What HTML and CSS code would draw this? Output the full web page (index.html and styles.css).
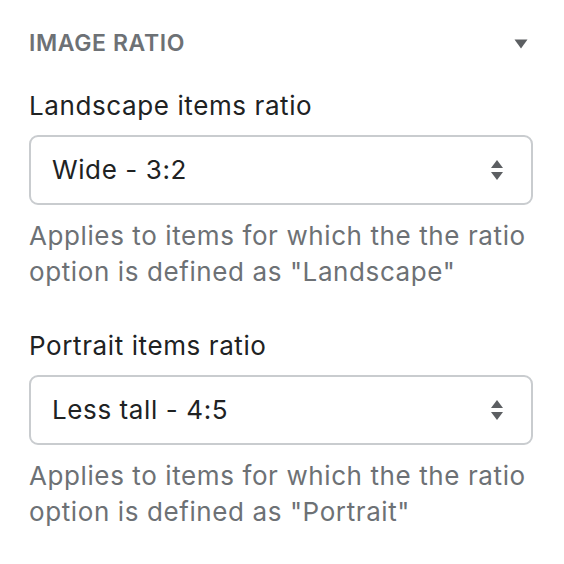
FILE: index.html
```html
<!DOCTYPE html>
<html lang="en">
<head>
<meta charset="utf-8">
<title>Image ratio</title>
<link rel="stylesheet" href="styles.css">
</head>
<body>
<div class="panel">
  <div class="section-head">
    <span class="section-title">IMAGE RATIO</span>
    <svg class="caret" width="14" height="10" viewBox="0 0 14 10"><path d="M0.5 0.5 H13.5 L7 9.5 Z" fill="#5c5f62"/></svg>
  </div>

  <div class="field">
    <div class="label">Landscape items ratio</div>
    <div class="select">
      <span class="value">Wide - 3:2</span>
      <svg class="arrows" width="14" height="22" viewBox="0 0 14 22"><path d="M7 1 L13 9 H1 Z M1 13 H13 L7 21 Z" fill="#5c5f62"/></svg>
    </div>
    <div class="help">Applies to items for which the the ratio option is defined as "Landscape"</div>
  </div>

  <div class="field">
    <div class="label">Portrait items ratio</div>
    <div class="select">
      <span class="value">Less tall - 4:5</span>
      <svg class="arrows" width="14" height="22" viewBox="0 0 14 22"><path d="M7 1 L13 9 H1 Z M1 13 H13 L7 21 Z" fill="#5c5f62"/></svg>
    </div>
    <div class="help">Applies to items for which the the ratio option is defined as "Portrait"</div>
  </div>
</div>
</body>
</html>
```

FILE: styles.css
```css
html, body {
  margin: 0;
  padding: 0;
  background: #ffffff;
}

body {
  font-family: Inter, "Noto Sans", "Liberation Sans", sans-serif;
  color: #202223;
  -webkit-font-smoothing: antialiased;
}

.panel {
  width: 564px;
  box-sizing: border-box;
  padding: 27px 31px 0 29px;
}

.section-head {
  display: flex;
  align-items: center;
  justify-content: space-between;
  height: 32px;
  margin-bottom: 29px;
}

.section-title {
  font-size: 23px;
  font-weight: 600;
  letter-spacing: 0.6px;
  color: #6d7175;
  line-height: 32px;
}

.caret {
  margin-right: 5px;
  margin-top: 2px;
}

.field {
  display: flex;
  flex-direction: column;
}

.field + .field {
  margin-top: 38px;
}

.label {
  font-size: 26px;
  letter-spacing: 0.6px;
  line-height: 36px;
  color: #202223;
  margin-bottom: 11px;
}

.select {
  box-sizing: border-box;
  height: 70px;
  border: 2px solid #c9cccf;
  border-radius: 9px;
  background: #ffffff;
  display: flex;
  align-items: center;
  justify-content: space-between;
  padding: 0 27px 0 21px;
}

.value {
  font-size: 26px;
  letter-spacing: 0.6px;
  line-height: 36px;
  color: #202223;
}

.help {
  margin-top: 13px;
  font-size: 26px;
  letter-spacing: 0.6px;
  line-height: 36px;
  color: #6d7175;
}
```
